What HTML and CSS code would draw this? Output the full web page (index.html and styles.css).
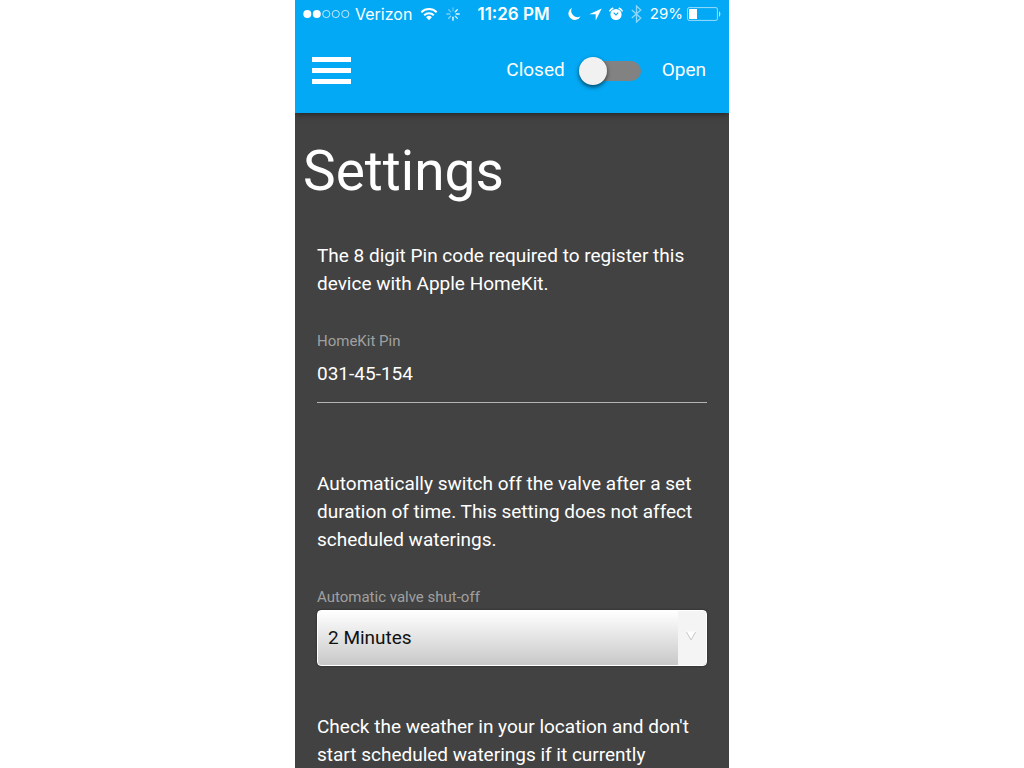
FILE: index.html
```html
<!DOCTYPE html>
<html lang="en">
<head>
<meta charset="utf-8">
<meta name="viewport" content="width=device-width, initial-scale=1">
<title>Settings</title>
<link rel="stylesheet" href="styles.css">
</head>
<body>
<div class="phone">
  <header class="top">
    <div class="status">
      <div class="status-group">
        <svg class="signal" width="47" height="10" viewBox="0 0 47 10" aria-hidden="true">
          <g fill="#fff"><circle cx="4.3" cy="5" r="4"/><circle cx="13.8" cy="5" r="4"/></g>
          <g fill="none" stroke="#fff" stroke-width=".9" opacity=".85"><circle cx="23.3" cy="5" r="3.6"/><circle cx="32.8" cy="5" r="3.6"/><circle cx="42.3" cy="5" r="3.6"/></g>
        </svg>
        <span class="carrier">Verizon</span>
        <svg class="wifi" width="18" height="14" viewBox="0 0 18 14" aria-hidden="true">
          <g fill="none" stroke="#fff" stroke-width="2"><path d="M1.300 5.200a11 11 0 0 1 15.400 0"/><path d="M4.200 8.200a6.800 6.800 0 0 1 9.600 0"/></g>
          <path fill="#fff" d="M6.100 10.200a4.200 4.200 0 0 1 5.800 0L9 13.200z"/>
        </svg>
        <svg class="spinner" width="14" height="14" viewBox="0 0 14 14" stroke="#fff" stroke-width="1.3" stroke-linecap="round" aria-hidden="true">
          <path d="M7 .8v3" opacity=".35"/><path d="M11.400 2.600 9.300 4.700" opacity=".95"/><path d="M13.200 7h-3" opacity=".9"/><path d="m11.400 11.400-2.100-2.100" opacity=".8"/><path d="M7 13.200v-3"/><path d="m2.600 11.400 2.100-2.100" opacity=".55"/><path d="M.8 7h3" opacity=".45"/><path d="m2.600 2.600 2.100 2.100" opacity=".4"/>
        </svg>
      </div>
      <span class="clock">11:26 PM</span>
      <div class="status-group status-right">
        <svg width="14" height="14" viewBox="0 0 14 14" aria-hidden="true"><path fill="#fff" d="M5 .8a6.400 6.400 0 1 0 8.600 8.500A6.300 6.300 0 0 1 5 .8z"/></svg>
        <svg class="arrow" width="13" height="13" viewBox="0 0 13 13" aria-hidden="true"><path fill="#fff" d="M12.700.4.3 6.200h6.400v6.400z"/></svg>
        <svg class="alarm" width="14" height="14" viewBox="0 0 14 14" aria-hidden="true">
          <circle cx="7" cy="7.5" r="5.6" fill="#fff"/><path d="M4.600 5.600 7 7.900l2.200-2.200" fill="none" stroke="#03a9f4" stroke-width="1.1"/>
          <path d="M.9 3.900A7.300 7.300 0 0 1 3.700 1.300M13.100 3.900a7.300 7.300 0 0 0-2.800-2.600" fill="none" stroke="#fff" stroke-width="1.6" stroke-linecap="round"/>
        </svg>
        <svg class="bluetooth" width="11" height="18" viewBox="0 0 11 18" aria-hidden="true"><path d="m.8 5 9 8-4.300 4V1l4.300 4-9 8" fill="none" stroke="#fff" stroke-width="1.3" opacity=".55"/></svg>
        <span class="percent">29%</span>
        <svg class="battery" width="34" height="14" viewBox="0 0 34 14" aria-hidden="true">
          <rect x=".6" y=".6" width="29.8" height="12.8" rx="1.5" fill="none" stroke="#fff" opacity=".6"/>
          <rect x="2" y="2" width="8" height="10" fill="#fff"/><path d="M32 4.200c1.800.8 1.800 4.800 0 5.600z" fill="#fff" opacity=".7"/>
        </svg>
      </div>
    </div>
    <nav class="toolbar">
      <button class="menu" type="button" aria-label="Menu"><span></span><span></span><span></span></button>
      <label class="valve">
        <span>Closed</span>
        <input class="toggle" type="checkbox" role="switch">
        <span>Open</span>
      </label>
    </nav>
  </header>
  <main class="content">
    <h1>Settings</h1>
    <section class="setting">
      <p>The 8 digit Pin code required to register this device with Apple HomeKit.</p>
      <label class="caption" for="pin">HomeKit Pin</label>
      <input class="pin" id="pin" type="text" value="031-45-154">
    </section>
    <section class="setting setting-shutoff">
      <p>Automatically switch off the valve after a set duration of time. This setting does not affect scheduled waterings.</p>
      <label class="caption" for="shutoff">Automatic valve shut-off</label>
      <div class="select-box">
        <select id="shutoff"><option>2 Minutes</option></select>
        <svg class="chevron" viewBox="0 0 28 54" aria-hidden="true"><path d="M8.500 20.500h9l-4.500 8z" fill="#fff"/><path d="m8.500 21 4.500 8 4.500-8" fill="none" stroke="#c8c8c8"/></svg>
      </div>
    </section>
    <section class="setting setting-weather">
      <p>Check the weather in your location and don't start scheduled waterings if it currently</p>
    </section>
  </main>
</div>
</body>
</html>
```
FILE: styles.css
```css
* { box-sizing: border-box; }
body {
  margin: 0;
  background: #fff;
  color: #fff;
  font: 19px/28px Roboto, "Liberation Sans", sans-serif;
}
.phone {
  display: flex;
  flex-direction: column;
  width: 100%;
  max-width: 434px;
  height: 100vh;
  margin: 0 auto;
  background: #424242;
  overflow: hidden;
}
.top {
  flex: none;
  background: #03a9f4;
  box-shadow: 0 1px 6px rgba(0, 0, 0, .5);
  z-index: 1;
}
.status {
  display: flex;
  align-items: center;
  justify-content: space-between;
  height: 28px;
  padding: 0 8px;
  font: 16px/28px Inter, "Liberation Sans", sans-serif;
}
.status-group { display: flex; align-items: center; }
.carrier { margin: 0 8px 0 5px; }
.spinner { margin-left: 8px; }
.clock { font-weight: 600; font-size: 17px; }
.arrow { margin-left: 8px; }
.alarm { margin-left: 7px; }
.bluetooth { margin-left: 8px; }
.percent { margin: 0 4px 0 8px; }
.status-right { font-size: 15px; }
.toolbar {
  display: flex;
  align-items: center;
  justify-content: space-between;
  height: 85px;
  padding: 0 23px 0 17px;
}
.menu {
  display: grid;
  gap: 6px;
  width: 39px;
  padding: 0;
  border: 0;
  background: none;
}
.menu span { height: 5px; background: #fff; }
.valve { display: flex; align-items: center; padding-bottom: 2px; }
.toggle {
  appearance: none;
  display: flex;
  align-items: center;
  width: 58px;
  height: 20px;
  margin: 3px 21px 0 18px;
  border-radius: 10px;
  background: #828282;
}
.toggle::before {
  content: "";
  width: 28px;
  height: 28px;
  margin-left: -4px;
  border-radius: 50%;
  background: #f1f1f1;
  box-shadow: 0 2px 4px rgba(0, 0, 0, .6);
}
.toggle:checked { justify-content: flex-end; }
.content {
  flex: 1;
  min-height: 0;
  padding-top: 24px;
  overflow: hidden auto;
  scrollbar-width: none;
}
h1 {
  margin: 0 8px 37px;
  font-size: 55px;
  line-height: 68px;
  font-weight: 400;
}
.setting { padding: 0 22px; }
.setting p { margin: 0; }
.caption {
  display: block;
  margin-top: 33px;
  color: #a0a0a0;
  font-size: 15px;
  line-height: 20px;
}
.pin {
  display: block;
  width: 100%;
  height: 52px;
  padding: 0 0 6px;
  border: 0;
  border-bottom: 1px solid #b4b4b4;
  background: none;
  color: #fff;
  font: inherit;
}
.setting-shutoff { margin-top: 67px; }
.select-box {
  display: grid;
  margin-top: 3px;
  grid-template-columns: 1fr 28px;
  border: 1px solid #fff;
  border-radius: 4px;
  background: linear-gradient(#fff, #c8c8c8);
  box-shadow: 0 0 2px #222;
  overflow: hidden;
}
.select-box select {
  grid-area: 1 / 1 / 2 / 3;
  appearance: none;
  height: 54px;
  padding: 0 38px 0 10px;
  border: 0;
  background: none;
  color: #111;
  font: inherit;
}
.chevron {
  grid-area: 1 / 2;
  width: 28px;
  height: 54px;
  background: #f4f4f4;
  pointer-events: none;
}
.setting-weather { margin-top: 47px; }
```
